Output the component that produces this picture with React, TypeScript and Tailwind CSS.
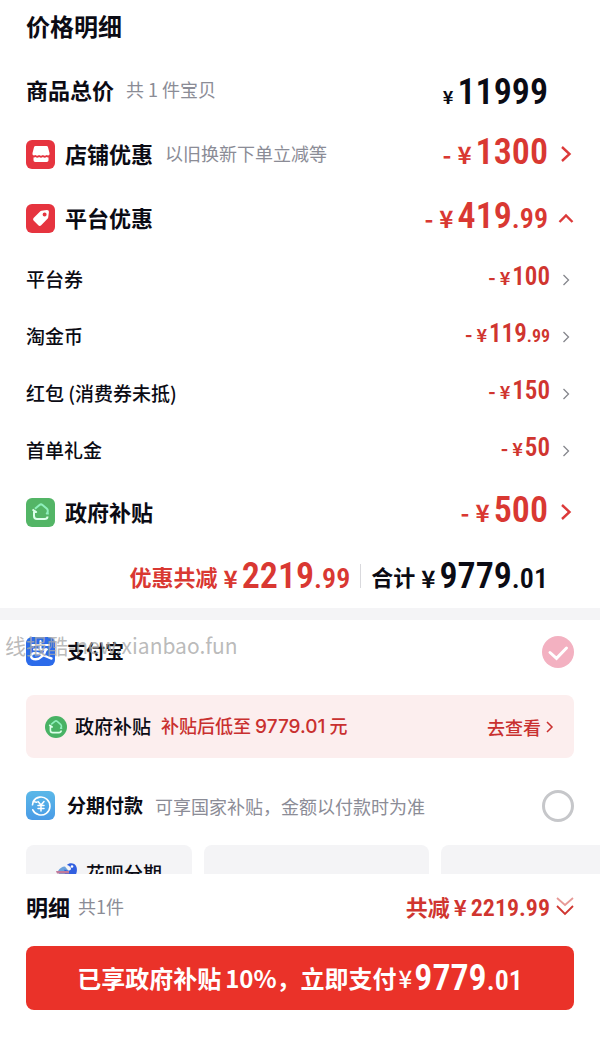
import clsx from "clsx";
import { ReactNode, useState } from "react";

type AmountSize = "lg" | "sm";

interface AmountProps {
  integer: string;
  decimal?: string;
  negative?: boolean;
  smallSymbol?: boolean;
  size?: AmountSize;
}

const numberFont = "font-['Roboto_Condensed',Roboto,sans-serif] font-semibold";

const subDiscounts = [
  { label: "平台券", integer: "100" },
  { label: "淘金币", integer: "119", decimal: ".99" },
  { label: "红包 (消费券未抵)", integer: "150" },
  { label: "首单礼金", integer: "50" },
];

function Amount({ integer, decimal, negative, smallSymbol, size = "lg" }: AmountProps) {
  const large = size === "lg";

  return (
    <span className="flex items-baseline leading-none">
      {negative && (
        <span className={clsx("font-bold", large ? "mr-1.5 text-2xl leading-none" : "mr-1 text-xl leading-none")}>-</span>
      )}
      <span
        className={clsx(
          "font-bold",
          large && !smallSymbol ? "mr-1 text-2xl leading-none" : "text-lg leading-none",
          smallSymbol ? "mr-1" : !large && "mr-0.5"
        )}
      >
        ¥
      </span>
      <span className={clsx(numberFont, large ? "text-[36px] leading-none" : "text-[25px] leading-none")}>{integer}</span>
      {decimal && (
        <span className={clsx(numberFont, large ? "text-[28px] leading-none" : "text-lg leading-none")}>{decimal}</span>
      )}
    </span>
  );
}

function Chevron({ direction = "right", thin }: { direction?: "right" | "up"; thin?: boolean }) {
  return (
    <svg
      viewBox="0 0 16 16"
      className={clsx("size-4", thin ? "text-[#85868c]" : "text-[#dc3a3a]")}
      fill="none"
      stroke="currentColor"
      strokeWidth={thin ? 1.3 : 2.4}
    >
      {direction === "up" ? (
        <path d="M1.500 12 8 5.500l6.500 6.500" />
      ) : thin ? (
        <path d="m5.500 3 5 5-5 5" />
      ) : (
        <path d="m4 1 7.500 7L4 15" />
      )}
    </svg>
  );
}

function IconTile({ children, className }: { children: ReactNode; className: string }) {
  return (
    <span className={clsx("flex size-[29px] shrink-0 items-center justify-center rounded-md", className)}>
      {children}
    </span>
  );
}

function StoreIcon() {
  return (
    <svg viewBox="0 0 18 16" className="h-4 w-[18px]" fill="#fff">
      <path d="M3.500 0h11c.8 0 1.300.4 1.500 1.200L17.500 7v1.500c-.6 1-1.800 1.200-2.800.5-1.200 1-2.700 1-3.800 0-1.100 1-2.700 1-3.800 0-1.200 1-2.700 1-3.800 0-1 .7-2.200.5-2.800-.5V7L2 1.200C2.200.4 2.700 0 3.500 0Z" />
      <path d="M1.500 11.500c.8.200 1.300 0 1.900-.4 1.200.8 2.600.8 3.700 0 1.200.8 2.600.8 3.800 0 1.100.8 2.500.8 3.700 0 .6.400 1.100.6 1.900.4v2.500c0 1.300-.6 2-1.900 2H3.400c-1.300 0-1.900-.7-1.900-2z" />
    </svg>
  );
}

function TagIcon() {
  return (
    <svg viewBox="0 0 18 18" className="size-[18px]" fill="#fff">
      <path
        fillRule="evenodd"
        d="M9.500 1.700 14.700 1c1.500-.1 2.300.7 2.200 2.200l-.7 5.200c-.1.600-.3 1-.7 1.400l-6.300 6.400c-.9.9-2 .9-2.900 0l-4.500-4.500c-.9-.9-.9-2 0-2.900l6.300-6.400c.4-.4.8-.6 1.400-.7ZM12.600 3.500a2 2 0 1 0 0 4 2 2 0 0 0 0-4Z"
      />
    </svg>
  );
}

function SubsidyIcon({ className }: { className: string }) {
  return (
    <svg viewBox="0 0 20 20" className={className} fill="none" strokeWidth="2" strokeLinejoin="round">
      <path d="M4 6.800 8.500 3c1-.8 2-.8 3 0l4.200 3.600c.8.700 1.100 1.400 1.100 2.400 0 1-.3 1.600-1 2.500h2" stroke="#8ff0bd" />
      <path d="M1.500 7.500 5.200 10H3v4c0 2 1 3 3 3h7.500c2 0 3-.8 3-2.500" stroke="#dcffea" />
    </svg>
  );
}

function AlipayIcon() {
  return (
    <svg viewBox="0 0 29 29" className="size-[29px]" fill="none" stroke="#fff" strokeLinecap="round">
      <path d="M6 8h17M14.500 4v8M8 12.500h13" strokeWidth="2" />
      <path
        d="M20 12.500c-1.500 5-5.500 9.800-10.300 9.800-3 0-4.600-1.300-4.600-3.100 0-2 2-3.200 4.500-3.200 4.800 0 9 3.600 15.900 5.500"
        strokeWidth="2.400"
      />
    </svg>
  );
}

function InstallmentIcon() {
  return (
    <svg viewBox="0 0 22 22" className="size-[22px]" fill="none" stroke="#fff" strokeWidth="1.600" strokeLinecap="round">
      <path d="M3.200 6.500a9 9 0 1 1-.4 8.300M3.200 6.500 2.500 9.800M3.200 6.500l3.600.8" />
      <path d="m8 6.500 3 3.500 3-3.500M11 10v6M8 10.600h6M8 13.400h6" strokeWidth="1.500" />
    </svg>
  );
}

function HuabeiIcon() {
  return (
    <svg viewBox="0 0 22 20" className="h-5 w-[22px]">
      <path d="M2 8c2-3 4-4.500 7-4.500l4 5-2 8H5z" fill="#6aa0dc" />
      <path d="M11 2C13-.5 19-.5 20.500 4c1.500 5-1 10-5 12-5-2-8-5-7-9.500 2.500 1.700 6 1.500 6.500-.5.400-1.500-2-3.500-4-4Z" fill="#315fe0" />
      <path d="M0 8h13v2.500H1z" fill="#c07a9c" />
      <circle cx="16" cy="3.500" r="1.300" fill="#fff" />
    </svg>
  );
}

interface PriceRowProps {
  label: string;
  note?: string;
  icon?: ReactNode;
  chevron?: ReactNode;
  children: ReactNode;
  onClick?: () => void;
}

function PriceRow({ label, note, icon, chevron, children, onClick }: PriceRowProps) {
  return (
    <div className="flex h-16 items-center justify-between">
      <div className="flex items-center">
        {icon && <div className="mr-2.5">{icon}</div>}
        <h2 className="pb-0.5 text-[22px] font-bold">{label}</h2>
        {note && <span className="ml-3 pb-0.5 text-lg text-[#8b8c96]">{note}</span>}
      </div>
      {chevron ? (
        <button type="button" onClick={onClick} aria-label={label} className="flex items-center gap-2.5 text-[#d93832]">
          <div className="pb-1">{children}</div>
          {chevron}
        </button>
      ) : (
        <div className="mr-[26px] pt-1">{children}</div>
      )}
    </div>
  );
}

export default function App() {
  const [expanded, setExpanded] = useState(true);
  const [method, setMethod] = useState("alipay");

  return (
    <div className="min-h-screen bg-white font-['Noto_Sans_CJK_SC',sans-serif] text-[#0b0b14]">
      <section className="px-[26px]">
        <h1 className="flex h-[58px] items-center pb-1.5 text-2xl font-bold">价格明细</h1>

        <PriceRow label="商品总价" note="共 1 件宝贝">
          <Amount integer="11999" smallSymbol />
        </PriceRow>
        <PriceRow
          label="店铺优惠"
          note="以旧换新下单立减等"
          icon={<IconTile className="bg-[#e6343f]"><StoreIcon /></IconTile>}
          chevron={<Chevron />}
        >
          <Amount integer="1300" negative />
        </PriceRow>
        <PriceRow
          label="平台优惠"
          icon={<IconTile className="bg-[#e6343f]"><TagIcon /></IconTile>}
          chevron={<Chevron direction="up" />}
          onClick={() => setExpanded(!expanded)}
        >
          <Amount integer="419" decimal=".99" negative />
        </PriceRow>

        {expanded && (
          <ul className="py-px">
            {subDiscounts.map((item) => (
              <li key={item.label} className="flex h-[57px] items-center justify-between">
                <span className="text-[19px] font-medium">{item.label}</span>
                <button type="button" aria-label={item.label} className="flex items-center gap-2 text-[#d0352f]">
                  <div className="pb-1.5">
                    <Amount integer={item.integer} decimal={item.decimal} size="sm" negative />
                  </div>
                  <Chevron thin />
                </button>
              </li>
            ))}
          </ul>
        )}

        <PriceRow
          label="政府补贴"
          icon={<IconTile className="bg-[#53b566]"><SubsidyIcon className="size-5" /></IconTile>}
          chevron={<Chevron />}
        >
          <Amount integer="500" negative />
        </PriceRow>

        <div className="flex h-16 items-center justify-end pr-[26px]">
          <div className="flex items-center gap-1.5 text-[#d93832]">
            <span className="text-[22px] font-bold">优惠共减</span>
            <Amount integer="2219" decimal=".99" />
          </div>
          <div className="mx-2.5 h-6 w-px bg-[#d9d9dd]" />
          <div className="flex items-center gap-1.5">
            <span className="text-[22px] font-bold">合计</span>
            <Amount integer="9779" decimal=".01" />
          </div>
        </div>
      </section>

      <div className="h-3 bg-[#f4f4f6]" />

      <section className="px-[26px]">
        <div className="relative flex h-[75px] items-center justify-between pb-3">
          <label htmlFor="alipay" className="flex items-center gap-3 text-[19px] font-bold">
            <IconTile className="bg-[#2c6bea]"><AlipayIcon /></IconTile>
            支付宝
          </label>
          <div className="relative size-8">
            <input
              id="alipay"
              type="radio"
              name="method"
              checked={method === "alipay"}
              onChange={() => setMethod("alipay")}
              className="block size-8 appearance-none rounded-full border-3 border-[#c6c7ca] checked:border-0 checked:bg-[#f3b1c1]"
            />
            {method === "alipay" && (
              <svg viewBox="0 0 32 32" className="pointer-events-none absolute inset-0" fill="none" stroke="#fff" strokeWidth="3" strokeLinecap="round">
                <path d="m8 16.500 6.500 5.800L24.500 12" />
              </svg>
            )}
          </div>
          <span className="pointer-events-none absolute -left-[21px] top-2.5 text-[21px] text-[#a9a9a9]/80">
            线报酷-new.xianbao.fun
          </span>
        </div>

        <div className="flex h-[63px] items-center rounded-lg bg-[#fceeee] px-[19px]">
          <span className="flex size-[22px] items-center justify-center rounded-full bg-[#48b264]">
            <SubsidyIcon className="size-4" />
          </span>
          <span className="ml-2 text-[19px] font-medium">政府补贴</span>
          <span className="ml-2.5 text-lg font-medium text-[#c9302f]">
            补贴后低至 <span className="font-[Inter,sans-serif] text-[19px]">9779.01</span> 元
          </span>
          <a href="#" className="ml-auto flex items-center gap-1 text-lg font-medium text-[#c9302f]">
            去查看
            <svg viewBox="0 0 10 16" className="h-4 w-2.5" fill="none" stroke="currentColor" strokeWidth="1.500">
              <path d="m2 3 5 5-5 5" />
            </svg>
          </a>
        </div>

        <div className="flex h-[87px] items-center justify-between pt-2">
          <label htmlFor="installment" className="flex items-center text-[19px] font-bold">
            <IconTile className="mr-3 bg-linear-to-b from-[#5bb8e8] to-[#4a9be6]"><InstallmentIcon /></IconTile>
            分期付款
            <span className="ml-3 text-lg font-normal text-[#8b8c96]">可享国家补贴，金额以付款时为准</span>
          </label>
          <input
            id="installment"
            type="radio"
            name="method"
            checked={method === "installment"}
            onChange={() => setMethod("installment")}
            className="size-8 appearance-none rounded-full border-3 border-[#c6c7ca] checked:border-0 checked:bg-[#f3b1c1]"
          />
        </div>
      </section>

      <div className="flex h-[29px] gap-3 overflow-hidden pl-[26px]">
        <div className="flex h-14 w-[166px] shrink-0 items-center justify-center gap-2 rounded-lg bg-[#f4f4f6]">
          <HuabeiIcon />
          <span className="text-[19px] font-medium">花呗分期</span>
        </div>
        <div className="h-14 w-[225px] shrink-0 rounded-lg bg-[#f4f4f6]" />
        <div className="h-14 w-[225px] shrink-0 rounded-lg bg-[#f4f4f6]" />
      </div>

      <footer className="px-[26px]">
        <div className="flex h-[72px] items-center justify-between pb-2">
          <div className="flex items-center gap-2">
            <h2 className="text-[22px] font-bold">明细</h2>
            <span className="text-lg text-[#8b8c96]">共1件</span>
          </div>
          <button type="button" className="flex items-center gap-1.5 text-[22px] font-bold text-[#d0352f]">
            <span className="flex items-baseline gap-1">
              共减 <span>¥</span>
              <span className={clsx(numberFont, "text-2xl leading-none")}>2219.99</span>
            </span>
            <svg viewBox="0 0 18 20" className="h-5 w-[18px]" fill="none" stroke="currentColor" strokeWidth="1.800">
              <path d="m1 2 8 7 8-7" opacity=".5" />
              <path d="m1 10 8 8 8-8" />
            </svg>
          </button>
        </div>
        <button
          type="button"
          className="flex h-16 w-full items-center justify-center rounded-lg bg-[#ea3229] text-white"
        >
          <span className="flex items-center text-2xl font-bold leading-none">
            已享政府补贴
            <span className="ml-1">10%，立即支付</span>
            <span className="mx-0.5 font-medium">¥</span>
            <span className="flex items-baseline">
              <span className={clsx(numberFont, "text-[36px] leading-none")}>9779</span>
              <span className={clsx(numberFont, "text-[28px] leading-none")}>.01</span>
            </span>
          </span>
        </button>
      </footer>
    </div>
  );
}
